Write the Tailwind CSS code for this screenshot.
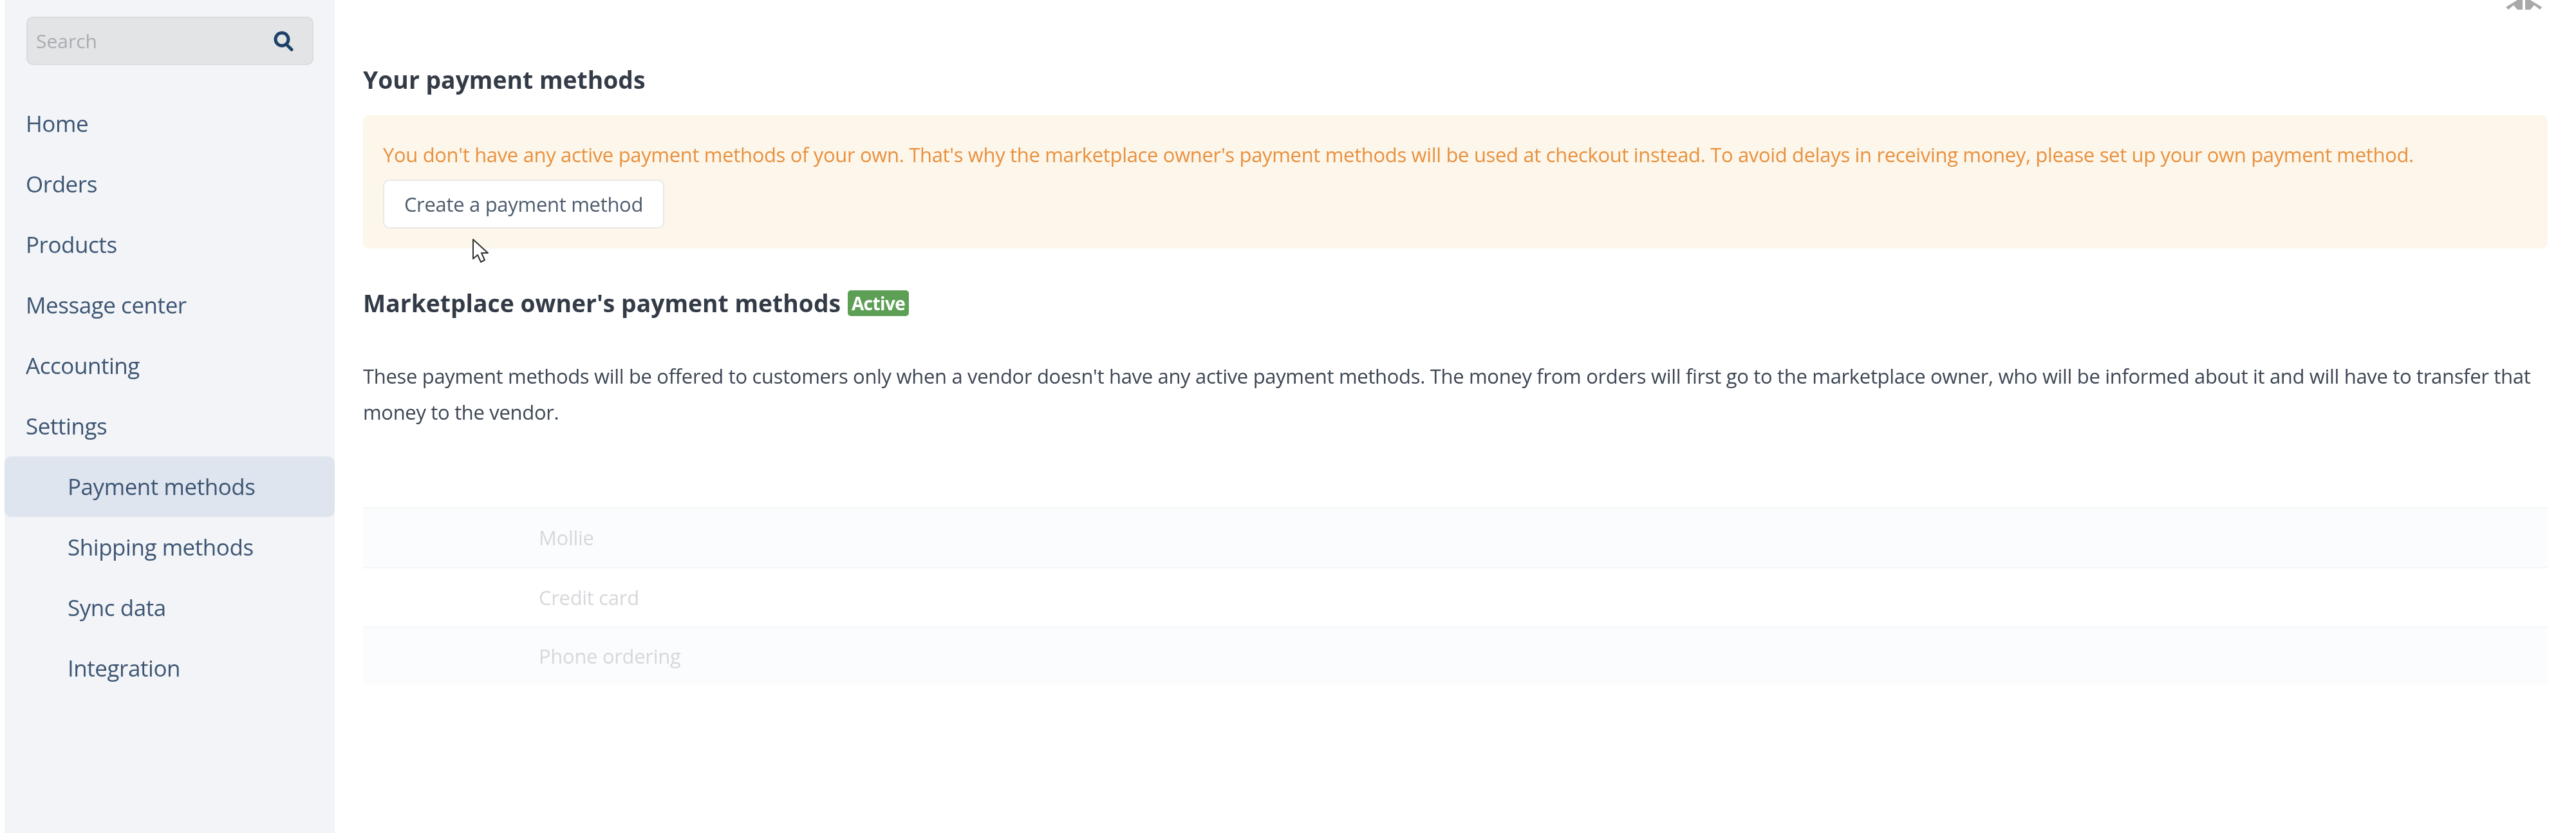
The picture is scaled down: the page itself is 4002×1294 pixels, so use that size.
<!DOCTYPE html>
<html lang="en">
<head>
<meta charset="utf-8">
<script src="https://cdn.jsdelivr.net/npm/@tailwindcss/browser@4"></script>
<title>Payment methods</title>
</head>
<body class="bg-white font-['Open_Sans',sans-serif]">
<div class="relative flex h-[1294px] w-[4002px] overflow-hidden bg-white pl-[7px] blur-[0.7px]">
  <aside class="h-full w-[513px] shrink-0 bg-[#f2f4f7] pt-[26px]">
    <div class="ml-[34px] flex h-[75px] w-[446px] items-center justify-between rounded-[10px] border-2 border-[#d9dbde] bg-[#e2e4e6] pl-[13px] pr-[29px]">
      <span class="text-[30px] text-[#a9adb2]">Search</span>
      <svg class="h-[32px] w-[32px]" viewBox="0 0 32 32" fill="none" stroke="#1f4068" stroke-width="5" stroke-linecap="round"><circle cx="14" cy="13" r="10"/><path d="M21 21l8 8"/></svg>
    </div>
    <nav class="mt-[44px] flex flex-col text-[35px] tracking-[-0.45px] text-[#3c5573]">
      <a class="flex h-[94px] items-center pl-[33px]">Home</a>
      <a class="flex h-[94px] items-center pl-[33px]">Orders</a>
      <a class="flex h-[94px] items-center pl-[33px]">Products</a>
      <a class="flex h-[94px] items-center pl-[33px]">Message center</a>
      <a class="flex h-[94px] items-center pl-[33px]">Accounting</a>
      <a class="flex h-[94px] items-center pl-[33px]">Settings</a>
      <a class="flex h-[94px] items-center rounded-[10px] bg-[#dfe5ef] pl-[98px]">Payment methods</a>
      <a class="flex h-[94px] items-center pl-[98px]">Shipping methods</a>
      <a class="flex h-[94px] items-center pl-[98px]">Sync data</a>
      <a class="flex h-[94px] items-center pl-[98px]">Integration</a>
    </nav>
  </aside>
  <main class="w-[3438px] shrink-0 pl-[44px] pt-[94px]">
    <h2 class="text-[37.3px] leading-[60px] font-bold text-[#333b47]">Your payment methods</h2>
    <section class="mt-[25px] h-[207px] rounded-[10px] bg-[#fdf6ea] pl-[31px] pt-[33px]">
      <p class="text-[31px] leading-[56px] tracking-[-0.34px] text-[#e8913f]">You don't have any active payment methods of your own. That's why the marketplace owner's payment methods will be used at checkout instead. To avoid delays in receiving money, please set up your own payment method.</p>
      <button class="mt-[11px] flex h-[76px] w-[437px] items-center justify-center rounded-[10px] border-2 border-[#e8e8e6] bg-white text-[31px] tracking-[-0.31px] text-[#4d5c6e]">Create a payment method</button>
    </section>
    <h2 class="mt-[55px] flex h-[60px] items-center gap-[11px] text-[37.3px] font-bold text-[#333b47]">Marketplace owner's payment methods
      <span class="flex h-[40px] w-[95px] items-center justify-center rounded-[5px] bg-[#5c9f55] text-[28px] font-bold tracking-[-0.6px] text-white">Active</span>
    </h2>
    <p class="mt-[55px] w-[3394px] text-[31px] leading-[56px] tracking-[-0.33px] text-[#3d4654]">These payment methods will be offered to customers only when a vendor doesn't have any active payment methods. The money from orders will first go to the marketplace owner, who will be informed about it and will have to transfer that money to the vendor.</p>
    <div class="mt-[120px] text-[31px] tracking-[-0.31px] text-[#d6d8db]">
      <div class="flex h-[93px] items-center border-t-2 border-[#f4f5f6] bg-[#fbfcfd] pl-[273px]">Mollie</div>
      <div class="flex h-[92px] items-center border-t-2 border-[#f4f5f6] bg-white pl-[273px]">Credit card</div>
      <div class="flex h-[90px] items-center border-t-2 border-[#f6f7f8] bg-[#fbfcfd] pl-[273px]">Phone ordering</div>
    </div>
  </main>
  <svg class="absolute left-[3893px] top-0 h-[16px] w-[56px]" viewBox="0 0 56 16" fill="#a9a9a9"><path d="M0 11L18 0h8v15h-8L12 8 4 15z"/><path d="M30 0h8l18 11-3 4-9-7-6 7h-8z"/></svg>
  <svg class="absolute left-[733px] top-[370px] h-[40px] w-[28px]" viewBox="0 0 28 40" fill="#fff" stroke="#333" stroke-width="2" stroke-linejoin="round"><path d="M2 2v30l7-6 5 11 6-3-5-11h10z"/></svg>
</div>
</body>
</html>
